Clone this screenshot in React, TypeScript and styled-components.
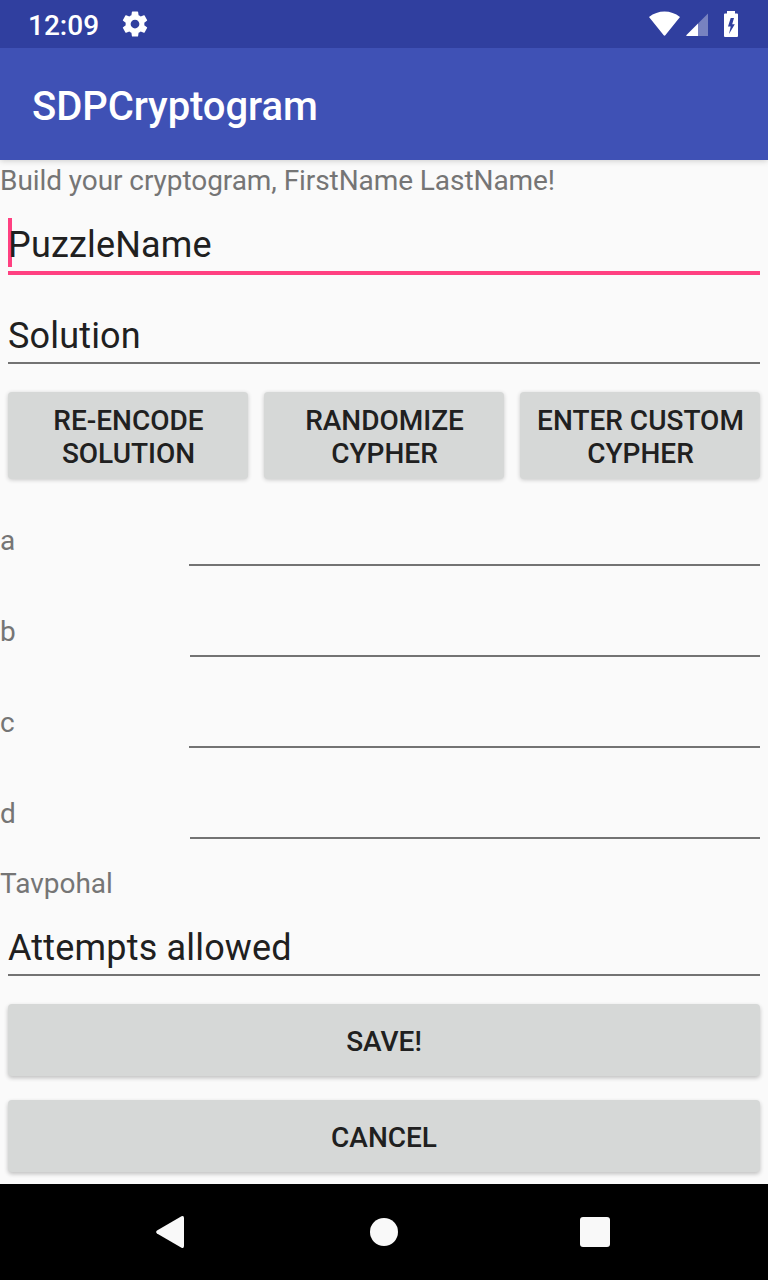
import React from 'react';
import styled, { createGlobalStyle } from 'styled-components';

const GlobalStyle = createGlobalStyle`
  * { box-sizing: border-box; }
  body { margin: 0; background: #fafafa; font-family: Roboto, sans-serif; }
`;
const Screen = styled.div`
  width: 768px; height: 1280px; display: flex; flex-direction: column;
  background: #fafafa; overflow: hidden;
`;
const StatusBar = styled.header`
  height: 48px; flex: none; display: flex; align-items: center;
  background: #303f9f; color: #fff; padding: 0 29px 0 28px;
`;
const Clock = styled.span`
  font-size: 28px; line-height: 46px; font-weight: 500; width: 92px; white-space: nowrap;
  padding-top: 3px;
`;
const StatusIcons = styled.div`
  margin-left: auto; height: 44px;
`;
const AppBar = styled.div`
  height: 112px; flex: none; display: flex; align-items: center; padding: 6px 32px 0;
  background: #3f51b5; color: #fff; box-shadow: 0 1px 6px rgba(0,0,0,.18); z-index: 1;
  clip-path: inset(0 0 -12px 0);
`;
const Title = styled.h1`
  margin: 0; font-size: 40px; line-height: 48px; font-weight: 500; letter-spacing: -0.07px;
`;
const Form = styled.main`
  height: 1024px; flex: none; display: flex; flex-direction: column;
`;
const Label = styled.div`
  height: 38px; flex: none; font-size: 28px; line-height: 42px; color: #757575;
  letter-spacing: -0.07px; white-space: nowrap;
`;
const Result = styled(Label)`
  margin-top: 5px; letter-spacing: 0;
`;
const Field = styled.div`
  height: 91px; flex: none; padding: 22px 8px 0; font-size: 36px; color: #202020;
  isolation: isolate;
`;
const Value = styled.div<{ $focused?: boolean }>`
  height: ${p => (p.$focused ? 55 : 53)}px; line-height: 50px; letter-spacing: 0.18px;
  white-space: nowrap; position: relative;
  border-bottom: ${p => (p.$focused ? '4px solid #ff4081' : '2px solid #737373')};
`;
const Caret = styled.span`
  position: absolute; left: 0; top: -2px; width: 4px; height: 49px; background: #ff4081; z-index: -1;
`;
const Buttons = styled.div<{ $top?: number; $bottom?: number }>`
  display: flex; gap: 16px; flex: none; padding: 0 8px;
  margin: ${p => p.$top ?? 12}px 0 ${p => p.$bottom ?? 0}px;
`;
const Button = styled.button<{ $tall?: boolean }>`
  flex: 1 1 0; height: ${p => (p.$tall ? 87 : 72)}px; border: 0; border-radius: 4px;
  padding: 2px 0 0 ${p => (p.$tall ? 1 : 0)}px;
  background: #d6d8d7; color: #202020; font: 500 28px/33px Roboto, sans-serif;
  box-shadow: ${p => (p.$tall ? '0 1px 4px rgba(0,0,0,.2)' : '0 2px 4px rgba(0,0,0,.24)')};
  white-space: pre-line; min-width: 0;
`;
const CipherRow = styled.div`
  height: 91px; flex: none; display: flex; align-items: flex-start; padding-right: 8px;
`;
const Letter = styled.span`
  flex: none; font-size: 28px; line-height: 34px; color: #757575; margin-top: 30px;
`;
const Slot = styled.span<{ $width: number }>`
  width: ${p => p.$width}px; height: 72px; margin-left: auto; border-bottom: 2px solid #737373;
`;
const NavBar = styled.nav`
  height: 96px; flex: none; background: #000; display: flex;
  align-items: center; justify-content: space-between; padding: 0 158px 0 156px;
`;

export default function App() {
  return (
    <>
      <GlobalStyle />
      <Screen>
        <StatusBar>
          <Clock>12:09</Clock>
          <svg width="30" height="30" viewBox="0 0 24 24" fill="#fff">
            <path d="M19.43 12.98c.04-.32.07-.64.07-.98s-.03-.66-.07-.98l2.11-1.65c.19-.15.24-.42.12-.64l-2-3.46c-.12-.22-.39-.3-.61-.22l-2.49 1c-.52-.4-1.08-.73-1.69-.98l-.38-2.65C14.46 2.18 14.25 2 14 2h-4c-.25 0-.46.18-.49.42l-.38 2.65c-.61.25-1.17.59-1.69.98l-2.49-1c-.23-.09-.49 0-.61.22l-2 3.46c-.13.22-.07.49.12.64l2.11 1.65c-.04.32-.07.65-.07.98s.03.66.07.98l-2.11 1.65c-.19.15-.24.42-.12.64l2 3.46c.12.22.39.3.61.22l2.49-1c.52.4 1.08.73 1.69.98l.38 2.65c.03.24.24.42.49.42h4c.25 0 .46-.18.49-.42l.38-2.65c.61-.25 1.17-.59 1.69-.98l2.49 1c.23.09.49 0 .61-.22l2-3.46c.12-.22.07-.49-.12-.64l-2.11-1.65zM12 15.5c-1.93 0-3.5-1.57-3.5-3.5s1.57-3.5 3.5-3.5 3.5 1.57 3.5 3.5-1.57 3.5-3.5 3.5z" />
          </svg>
          <StatusIcons>
            <svg width="90" height="44" viewBox="649 2 90 44" fill="#fff">
              <path d="M649 17Q656 11.500 664.500 11.500T680 17L665.500 35Q664.500 36.300 663.500 35Z" />
              <path d="M708 13.500V36H698V23.500Z" opacity=".35" />
              <path d="M698 23.500V36H687Q685.500 36 686.500 35Z" />
              <path fillRule="evenodd" d="M727 11h8v2.500h2a1 1 0 0 1 1 1V36a1 1 0 0 1-1 1h-12a1 1 0 0 1-1-1V14.500a1 1 0 0 1 1-1h2zM734 18h-3.300L728 26.500h2.700L729 34l5.800-9.800h-2.600z" />
            </svg>
          </StatusIcons>
        </StatusBar>
        <AppBar><Title>SDPCryptogram</Title></AppBar>
        <Form>
          <Label>Build your cryptogram, FirstName LastName!</Label>
          <Field><Value $focused><Caret />PuzzleName</Value></Field>
          <Field><Value>Solution</Value></Field>
          <Buttons $bottom={15}>
            <Button $tall>{'RE-ENCODE\nSOLUTION'}</Button>
            <Button $tall>{'RANDOMIZE\nCYPHER'}</Button>
            <Button $tall>{'ENTER CUSTOM\nCYPHER'}</Button>
          </Buttons>
          {['a', 'b', 'c', 'd'].map((c, i) => (
            <CipherRow key={c}><Letter>{c}</Letter><Slot $width={i % 2 ? 570 : 571} /></CipherRow>
          ))}
          <Result>Tavpohal</Result>
          <Field><Value>Attempts allowed</Value></Field>
          <Buttons><Button>SAVE!</Button></Buttons>
          <Buttons $top={24}><Button>CANCEL</Button></Buttons>
        </Form>
        <NavBar>
          <svg width="32" height="32" viewBox="0 0 32 32" fill="#f9f9f9">
            <path d="M1 14.500 25.500.300Q28-.700 28 2V30Q28 32.700 25.500 31.700L1 17.500Q-.700 16 1 14.500Z" />
          </svg>
          <svg width="28" height="28" fill="#f9f9f9"><circle cx="14" cy="14" r="14" /></svg>
          <svg width="30" height="30" fill="#f9f9f9"><rect width="30" height="30" rx="3" /></svg>
        </NavBar>
      </Screen>
    </>
  );
}
